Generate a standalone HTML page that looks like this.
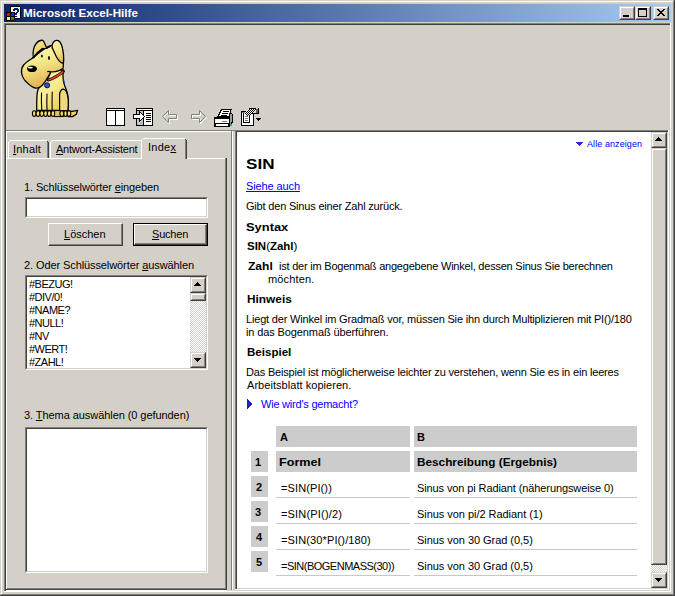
<!DOCTYPE html>
<html><head><meta charset="utf-8">
<style>
*{margin:0;padding:0;box-sizing:border-box}
html,body{width:675px;height:596px;overflow:hidden;background:#d4d0c8}
body{position:relative;font-family:"Liberation Sans",sans-serif;font-size:11px;color:#000}
.a{position:absolute}
.t{position:absolute;white-space:nowrap;line-height:13px}
u{text-decoration:underline;text-underline-offset:1px}
.r{position:absolute;border-style:solid;border-width:1px;border-color:#d4d0c8 #404040 #404040 #d4d0c8;background:#d4d0c8}
.r>i{position:absolute;left:0;top:0;right:0;bottom:0;border-style:solid;border-width:1px;border-color:#fff #808080 #808080 #fff}
.p{position:absolute;border-style:solid;border-width:1px;border-color:#fff #404040 #404040 #fff;background:#d4d0c8}
.p>i{position:absolute;left:0;top:0;right:0;bottom:0;border-style:solid;border-width:0 1px 1px 0;border-color:#808080}
.s{position:absolute;border-style:solid;border-width:1px;border-color:#808080 #fff #fff #808080}
.s>i{position:absolute;left:0;top:0;right:0;bottom:0;border-style:solid;border-width:1px;border-color:#404040 #d4d0c8 #d4d0c8 #404040;background:#fff}
.chk{position:absolute;background-color:#d4d0c8;background-image:repeating-conic-gradient(#fff 0 25%,#d4d0c8 0 50%);background-size:2px 2px}
.g{position:absolute;background:#cccccc}
.ln{position:absolute;height:1px;background:#c8c8c8}
</style></head><body>

<!-- window frame -->
<div class="a" style="left:1px;top:1px;width:673px;height:1px;background:#fff"></div>
<div class="a" style="left:1px;top:1px;width:1px;height:593px;background:#fff"></div>
<div class="a" style="left:673px;top:1px;width:1px;height:594px;background:#808080"></div>
<div class="a" style="left:674px;top:0;width:1px;height:596px;background:#404040"></div>
<div class="a" style="left:1px;top:594px;width:673px;height:1px;background:#808080"></div>
<div class="a" style="left:0;top:595px;width:675px;height:1px;background:#404040"></div>

<!-- title bar -->
<div class="a" style="left:4px;top:4px;width:667px;height:18px;background:linear-gradient(to right,#0a246a,#a6caf0)"></div>
<svg class="a" style="left:4px;top:4px" width="20" height="18" viewBox="4 4 20 18" shape-rendering="crispEdges">
<path d="M10 6h10v1h1v11h-1v1h-4v1h-1v1h-1v-1h-1v-1h-3z" fill="#000"/>
<rect x="11" y="7" width="9" height="11" fill="#fff"/>
<g fill="#ffff00"><rect x="11" y="7" width="1" height="1"/><rect x="13" y="7" width="1" height="1"/><rect x="17" y="7" width="1" height="1"/><rect x="19" y="8" width="1" height="1"/><rect x="12" y="9" width="1" height="1"/><rect x="11" y="11" width="1" height="1"/><rect x="19" y="13" width="1" height="1"/><rect x="19" y="15" width="1" height="1"/><rect x="17" y="16" width="1" height="1"/></g>
<path d="M13 9h1v-1h4v1h1v3h-1v1h-1v2h-2v-2h1v-1h1v-2h-2v1h-2z" fill="#0a1a80"/>
<rect x="15" y="16" width="2" height="1" fill="#0a1a80"/>
<rect x="6" y="12" width="9" height="9" fill="#000"/>
<rect x="7" y="13" width="3" height="3" fill="#ff0000"/>
<rect x="11" y="13" width="3" height="3" fill="#0030ff"/>
<rect x="7" y="17" width="3" height="3" fill="#ffff00"/>
<rect x="11" y="17" width="3" height="3" fill="#00a000"/>
</svg>

<div class="r" style="left:619px;top:6px;width:16px;height:14px"><i></i></div>
<div class="r" style="left:635px;top:6px;width:16px;height:14px"><i></i></div>
<div class="r" style="left:653px;top:6px;width:16px;height:14px"><i></i></div>
<div class="a" style="left:623px;top:15px;width:6px;height:2px;background:#000"></div>
<div class="a" style="left:638px;top:8px;width:9px;height:9px;border:1px solid #000;border-top-width:2px"></div>
<svg class="a" style="left:657px;top:9px" width="8" height="7" viewBox="0 0 8 7" shape-rendering="crispEdges"><path d="M0 0h2v1h1v1h2v-1h1v-1h2v1h-1v1h-1v1h-1v1h1v1h1v1h1v1h-2v-1h-1v-1h-2v1h-1v1h-2v-1h1v-1h1v-1h1v-1h-1v-1h-1v-1h-1z" fill="#000"/></svg>

<!-- client edge -->
<div class="a" style="left:4px;top:23px;width:667px;height:1px;background:#808080"></div>
<div class="a" style="left:4px;top:23px;width:1px;height:569px;background:#808080"></div>
<div class="a" style="left:5px;top:24px;width:665px;height:1px;background:#404040"></div>
<div class="a" style="left:5px;top:24px;width:1px;height:567px;background:#404040"></div>
<div class="a" style="left:6px;top:131px;width:1px;height:460px;background:#fff"></div>
<div class="a" style="left:670px;top:23px;width:1px;height:569px;background:#fff"></div>
<div class="a" style="left:4px;top:591px;width:667px;height:1px;background:#fff"></div>
<div class="a" style="left:6px;top:590px;width:221px;height:1px;background:#fff"></div>

<!-- toolbar -->
<svg class="a" style="left:16px;top:36px" width="64" height="84" viewBox="16 36 64 84">
<defs>
<linearGradient id="fur" x1="0" y1="0" x2="1" y2="1"><stop offset="0" stop-color="#fffcc0"/><stop offset="0.5" stop-color="#f6ea8c"/><stop offset="1" stop-color="#e4bc58"/></linearGradient>
<linearGradient id="snout" x1="0" y1="0" x2="0.3" y2="1"><stop offset="0" stop-color="#fffac0"/><stop offset="0.5" stop-color="#f6e888"/><stop offset="1" stop-color="#e0b050"/></linearGradient>
<linearGradient id="ear" x1="0" y1="0" x2="0.6" y2="1"><stop offset="0" stop-color="#fcf4a0"/><stop offset="0.6" stop-color="#eed070"/><stop offset="1" stop-color="#d8a040"/></linearGradient>
<linearGradient id="ear2" x1="0" y1="0" x2="0.3" y2="1"><stop offset="0" stop-color="#fcf4a8"/><stop offset="0.7" stop-color="#f4e080"/><stop offset="1" stop-color="#e4b850"/></linearGradient>
</defs>
<g stroke="#000" stroke-width="1.3" stroke-linejoin="round" stroke-linecap="round">
<!-- tail -->
<path d="M68 111 L72 111.3 L77.6 110.3 L76.3 114.3 L72.5 116.6 L68 116.6 Z" fill="#f0d460"/>
<!-- body -->
<path d="M41 85 C38.5 87.5 37.4 90 37 95 C36.7 100 36.7 106 36.7 110.5 L68 110.5 C68.6 104 68.6 97 67 92 C66 88 64 85 63.4 81 C62.8 77 63 73 63.4 70 L48 70 Z" fill="url(#fur)"/>
<!-- haunch -->
<path d="M59.6 110.5 L59.6 94 C60.3 91 61.8 89.2 63.4 89.2 C65.8 89.6 67.6 93 68.2 100 C68.4 104 68.2 108 67.9 110.5 Z" fill="#f2d878" stroke-width="1.2"/>
<!-- toes -->
<g fill="#f4e070" stroke-width="1.1">
<ellipse cx="34.2" cy="113.6" rx="1.8" ry="2.9"/>
<ellipse cx="38" cy="113.6" rx="1.9" ry="2.9"/>
<ellipse cx="41.8" cy="113.6" rx="1.9" ry="2.9"/>
<ellipse cx="45.6" cy="113.6" rx="1.9" ry="2.9"/>
<ellipse cx="49.3" cy="113.6" rx="1.9" ry="2.9"/>
<ellipse cx="53" cy="113.6" rx="1.9" ry="2.9"/>
<ellipse cx="65.5" cy="113.6" rx="1.9" ry="2.9"/>
<ellipse cx="69" cy="113.6" rx="1.8" ry="2.8"/>
</g>
<path d="M55 110.6 L63.6 110.6 L63.6 116.6 L55 116.6 Z" fill="#e8c058" stroke-width="1"/>
<ellipse cx="61.8" cy="113.6" rx="1.9" ry="2.9" fill="#f0d468" stroke-width="1.1"/>
<!-- leg lines -->
<g fill="none" stroke-width="1.1">
<path d="M41.5 93 C41.3 99 41.4 105 41.8 110"/>
<path d="M47 94 C46.8 100 46.8 105 47 110"/>
<path d="M52.2 92 C52 99 52 105 52.2 110"/>
</g>
<!-- head -->
<path d="M33.5 57.4 C30.5 59.5 26 62 23.6 65 C21.6 67.5 21.3 70.5 21.6 73 C22.2 77 24 80 27 82.6 C29.5 85 32.5 87.6 35.8 88.2 C39 88.4 42 86 44.2 82.8 C46 80.5 48.4 77 49.4 74.8 C50.3 73.2 50.6 72 50.4 71.8 C54 72.2 59 71.5 63.2 68 C63.8 64 63.5 58 62.6 53 C61.5 48 58 45 54 45 C50 45 44 48 33.5 57.4 Z" fill="url(#snout)"/>
<!-- left ear -->
<path d="M33.3 57.6 C32.6 52 33.5 47 36.2 43.5 C38 41.3 40.8 40.1 42.6 40.3 C44 41.3 45 44 46 46.6 C46.5 47.6 47.2 48 47.4 48 L42.4 48.8 C39 51 36 54 33.3 57.6 Z" fill="url(#ear)"/>
<path d="M33.5 57.4 C36 54 39 51 42.6 48.6" fill="none" stroke-width="1.6"/>
<!-- head top notch -->
<path d="M46.6 47.6 C48 48 49.5 47.3 50.8 45.6" fill="none" stroke-width="1.2"/>
<!-- right ear -->
<path d="M52.9 49.3 C51.2 47 52.2 43 54.3 41.2 C55.5 40.3 57 40.1 58.3 40.6 C60.2 41.6 61.6 44.5 62.4 48 C63.3 52 63.9 56 63.7 59.5 C63.6 61.5 63.1 63.2 62.4 63.2 C60.5 62.5 58.5 60.5 56.5 57 C55 54 54 51.5 52.9 49.3 Z" fill="url(#ear2)"/>
</g>
<!-- nose -->
<ellipse cx="32" cy="68.8" rx="5" ry="3.3" fill="#000"/>
<ellipse cx="30.4" cy="67.6" rx="2.5" ry="0.9" fill="#fff"/>
<!-- eyes -->
<ellipse cx="41.9" cy="56" rx="0.9" ry="1.6" fill="#000"/>
<ellipse cx="49" cy="58" rx="0.95" ry="1.9" fill="#000"/>
<!-- mouth -->
<path d="M47.2 71.8 C48.5 71.2 50.4 71.4 50.4 72.6 C50 75 48 77.5 46 79.8" fill="none" stroke="#000" stroke-width="1.2"/>
<!-- collar -->
<path d="M48.2 80 C53 78.5 58.5 75.5 63.4 71.3" fill="none" stroke="#000" stroke-width="3" stroke-linecap="round"/>
<path d="M48.8 79.9 C53 78.6 58.5 75.7 62.9 71.9" fill="none" stroke="#f04818" stroke-width="1.5" stroke-linecap="round"/>
<!-- tag -->
<circle cx="47.1" cy="85.3" r="2.6" fill="#1e5ae8" stroke="#000" stroke-width="0.8"/>
<path d="M63.6 79.5 L64.6 84" fill="none" stroke="#2040b0" stroke-width="1"/>
</svg>

<svg class="a" style="left:100px;top:100px" width="170" height="32" viewBox="100 100 170 32" shape-rendering="crispEdges">
<!-- icon1: hide -->
<rect x="106" y="108" width="19" height="18" fill="#000"/>
<rect x="107" y="111" width="8" height="14" fill="#fff"/>
<rect x="116" y="111" width="8" height="14" fill="#fff"/>
<rect x="107" y="109" width="17" height="1" fill="#fff"/>
<!-- icon2: show -->
<rect x="136" y="108" width="17" height="18" fill="#000"/>
<rect x="137" y="111" width="6" height="14" fill="#c0c0c0"/>
<rect x="144" y="111" width="8" height="14" fill="#fff"/>
<rect x="137" y="109" width="15" height="1" fill="#fff"/>
<g fill="#000"><rect x="146" y="113" width="5" height="1"/><rect x="146" y="115" width="5" height="1"/><rect x="146" y="117" width="5" height="1"/><rect x="146" y="119" width="5" height="1"/><rect x="146" y="121" width="5" height="1"/></g>
<path d="M133 114h6v-3h1v1h1v1h1v1h1v1h1v1h1v1h-1v1h-1v1h-1v1h-1v1h-1v1h-1v-3h-6z" fill="#000"/>
<path d="M134 115h6v-2h1v1h1v1h1v1h1v1h-1v1h-1v1h-1v1h-1v-2h-6z" fill="#fff"/>
<!-- back (disabled) -->
<g shape-rendering="auto" fill="none" stroke-width="1">
<path d="M169.5 111.5 L163.5 117.5 L169.5 123.5 V119.5 H177.5 V115.5 H169.5 Z" stroke="#fff"/>
<path d="M168.5 110.5 L162.5 116.5 L168.5 122.5 V118.5 H176.5 V114.5 H168.5 Z" stroke="#808080"/>
<path d="M192.5 115.5 H200.5 V111.5 L206.5 117.5 L200.5 123.5 V119.5 H192.5 Z" stroke="#fff"/>
<path d="M191.5 114.5 H199.5 V110.5 L205.5 116.5 L199.5 122.5 V118.5 H191.5 Z" stroke="#808080"/>
</g>
<!-- print -->
<path d="M221 109h11v1h-1v7h-14v-1h1v-2h1v-2h1v-2h1z" fill="#000"/>
<path d="M222 110h8v6h-11v-1h1v-2h1v-2h1z" fill="#fff"/>
<g fill="#000"><rect x="223" y="111" width="6" height="1"/><rect x="222" y="113" width="6" height="1"/><rect x="221" y="115" width="6" height="1"/></g>
<path d="M229 113h3v1h1v9h-1v2h-1v1h-2z" fill="#000"/>
<path d="M230 114h2v8h-1v2h-1z" fill="#a0a0a0"/>
<rect x="214" y="117" width="16" height="10" fill="#000"/>
<rect x="215" y="119" width="14" height="4" fill="#fff"/>
<rect x="216" y="124" width="12" height="2" fill="#fff"/>
<rect x="222" y="121" width="5" height="1" fill="#808080"/>
<rect x="230" y="124" width="2" height="2" fill="#00c0c0"/>
<!-- options -->
<rect x="241" y="111" width="13" height="15" fill="#000"/>
<rect x="242" y="113" width="11" height="12" fill="#fff"/>
<rect x="242" y="112" width="3" height="1" fill="#808080"/>
<rect x="243" y="113" width="7" height="10" fill="#000"/>
<rect x="244" y="114" width="5" height="8" fill="#fff"/>
<g fill="#808080"><rect x="245" y="116" width="3" height="1"/><rect x="245" y="118" width="3" height="1"/><rect x="245" y="120" width="3" height="1"/></g>
<rect x="249" y="108" width="7" height="1" fill="#000"/>
<rect x="256" y="109" width="2" height="4" fill="#606060"/>
<rect x="258" y="108" width="1" height="6" fill="#000"/>
<rect x="252" y="113" width="6" height="1" fill="#000"/>
<rect x="248" y="109" width="1" height="1" fill="#fff"/>
<rect x="249" y="109" width="1" height="1" fill="#000"/>
<rect x="250" y="109" width="1" height="1" fill="#fff"/>
<rect x="251" y="109" width="1" height="1" fill="#000"/>
<rect x="252" y="109" width="1" height="1" fill="#fff"/>
<rect x="253" y="109" width="1" height="1" fill="#000"/>
<rect x="254" y="109" width="1" height="1" fill="#fff"/>
<rect x="255" y="109" width="1" height="1" fill="#000"/>
<rect x="247" y="110" width="1" height="1" fill="#fff"/>
<rect x="248" y="110" width="1" height="1" fill="#000"/>
<rect x="249" y="110" width="1" height="1" fill="#fff"/>
<rect x="250" y="110" width="1" height="1" fill="#000"/>
<rect x="251" y="110" width="1" height="1" fill="#fff"/>
<rect x="252" y="110" width="1" height="1" fill="#000"/>
<rect x="253" y="110" width="1" height="1" fill="#fff"/>
<rect x="254" y="110" width="1" height="1" fill="#000"/>
<rect x="255" y="110" width="1" height="1" fill="#fff"/>
<rect x="246" y="111" width="1" height="1" fill="#fff"/>
<rect x="247" y="111" width="1" height="1" fill="#000"/>
<rect x="248" y="111" width="1" height="1" fill="#fff"/>
<rect x="249" y="111" width="1" height="1" fill="#000"/>
<rect x="250" y="111" width="1" height="1" fill="#fff"/>
<rect x="251" y="111" width="1" height="1" fill="#000"/>
<rect x="252" y="111" width="1" height="1" fill="#fff"/>
<rect x="253" y="111" width="1" height="1" fill="#000"/>
<rect x="254" y="111" width="1" height="1" fill="#fff"/>
<rect x="245" y="112" width="1" height="1" fill="#fff"/>
<rect x="246" y="112" width="1" height="1" fill="#000"/>
<rect x="247" y="112" width="1" height="1" fill="#fff"/>
<rect x="248" y="112" width="1" height="1" fill="#000"/>
<rect x="249" y="112" width="1" height="1" fill="#fff"/>
<rect x="250" y="112" width="1" height="1" fill="#000"/>
<rect x="251" y="112" width="1" height="1" fill="#fff"/>
<rect x="252" y="112" width="1" height="1" fill="#000"/>
<rect x="253" y="112" width="1" height="1" fill="#fff"/>
<rect x="244" y="113" width="1" height="1" fill="#fff"/>
<rect x="245" y="113" width="1" height="1" fill="#000"/>
<rect x="246" y="113" width="1" height="1" fill="#fff"/>
<rect x="247" y="113" width="1" height="1" fill="#000"/>
<rect x="248" y="113" width="1" height="1" fill="#fff"/>
<rect x="249" y="113" width="1" height="1" fill="#000"/>
<rect x="250" y="113" width="1" height="1" fill="#fff"/>
<rect x="251" y="113" width="1" height="1" fill="#000"/>
<rect x="245" y="114" width="1" height="1" fill="#fff"/>
<rect x="246" y="114" width="1" height="1" fill="#000"/>
<rect x="247" y="114" width="1" height="1" fill="#fff"/>
<rect x="248" y="114" width="1" height="1" fill="#000"/>
<rect x="249" y="114" width="1" height="1" fill="#fff"/>
<rect x="250" y="114" width="1" height="1" fill="#000"/>
<rect x="247" y="115" width="1" height="1" fill="#000"/>
<rect x="248" y="115" width="1" height="1" fill="#fff"/>
<path d="M256 118h5v1h-1v1h-1v1h-1v-1h-1v-1h-1z" fill="#000"/>
</svg>

<div class="a" style="left:6px;top:130px;width:662px;height:1px;background:#808080"></div>
<div class="a" style="left:6px;top:131px;width:225px;height:1px;background:#fff"></div>

<!-- tab control -->
<div class="a" style="left:6px;top:158px;width:135px;height:1px;background:#fff"></div>
<div class="a" style="left:187px;top:158px;width:39px;height:1px;background:#fff"></div>
<div class="a" style="left:225px;top:158px;width:1px;height:431px;background:#808080"></div>
<div class="a" style="left:226px;top:158px;width:1px;height:432px;background:#404040"></div>
<div class="a" style="left:7px;top:588px;width:219px;height:1px;background:#808080"></div>
<div class="a" style="left:6px;top:589px;width:221px;height:1px;background:#404040"></div>
<!-- tab Inhalt -->
<div class="a" style="left:8px;top:142px;width:1px;height:16px;background:#fff"></div>
<div class="a" style="left:9px;top:141px;width:1px;height:1px;background:#fff"></div>
<div class="a" style="left:10px;top:140px;width:37px;height:1px;background:#fff"></div>
<div class="a" style="left:47px;top:141px;width:1px;height:1px;background:#404040"></div>
<div class="a" style="left:47px;top:142px;width:1px;height:16px;background:#808080"></div>
<div class="a" style="left:48px;top:142px;width:1px;height:16px;background:#404040"></div>
<!-- tab Antwort -->
<div class="a" style="left:50px;top:142px;width:1px;height:16px;background:#fff"></div>
<div class="a" style="left:51px;top:141px;width:1px;height:1px;background:#fff"></div>
<div class="a" style="left:52px;top:140px;width:89px;height:1px;background:#fff"></div>
<!-- tab Index (selected) -->
<div class="a" style="left:141px;top:140px;width:1px;height:19px;background:#fff"></div>
<div class="a" style="left:142px;top:139px;width:1px;height:1px;background:#fff"></div>
<div class="a" style="left:143px;top:138px;width:42px;height:1px;background:#fff"></div>
<div class="a" style="left:185px;top:139px;width:1px;height:1px;background:#404040"></div>
<div class="a" style="left:185px;top:140px;width:1px;height:19px;background:#808080"></div>
<div class="a" style="left:186px;top:140px;width:1px;height:19px;background:#404040"></div>

<!-- left widgets -->
<div class="s" style="left:25px;top:197px;width:183px;height:21px"><i></i></div>
<div class="p" style="left:48px;top:223px;width:75px;height:23px"><i></i></div>
<div class="a" style="left:133px;top:223px;width:75px;height:23px;background:#000"></div>
<div class="p" style="left:134px;top:224px;width:73px;height:21px"><i></i></div>
<div class="s" style="left:25px;top:275px;width:183px;height:95px"><i></i></div>
<div class="chk" style="left:190px;top:293px;width:16px;height:59px"></div>
<div class="r" style="left:190px;top:277px;width:16px;height:16px"><i></i></div>
<div class="r" style="left:190px;top:293px;width:16px;height:8px"><i></i></div>
<div class="r" style="left:190px;top:352px;width:16px;height:16px"><i></i></div>
<svg class="a" style="left:194px;top:282px" width="7" height="4" shape-rendering="crispEdges"><path d="M3 0h1v1h1v1h1v1h1v1h-7v-1h1v-1h1v-1h1z"/></svg>
<svg class="a" style="left:194px;top:358px" width="7" height="4" shape-rendering="crispEdges"><path d="M0 0h7v1h-1v1h-1v1h-1v1h-1v-1h-1v-1h-1v-1h-1z"/></svg>
<div class="s" style="left:25px;top:427px;width:183px;height:146px"><i></i></div>

<!-- splitter / right frame -->
<div class="a" style="left:231px;top:130px;width:1px;height:460px;background:#808080"></div>
<div class="a" style="left:232px;top:131px;width:1px;height:459px;background:#fff"></div>
<div class="a" style="left:235px;top:130px;width:1px;height:460px;background:#808080"></div>
<div class="a" style="left:236px;top:131px;width:432px;height:1px;background:#404040"></div>
<div class="a" style="left:236px;top:131px;width:1px;height:458px;background:#404040"></div>
<div class="a" style="left:237px;top:132px;width:430px;height:456px;background:#fff"></div>
<div class="a" style="left:235px;top:589px;width:434px;height:1px;background:#fff"></div>
<div class="a" style="left:668px;top:130px;width:1px;height:460px;background:#fff"></div>

<!-- right scrollbar -->
<div class="chk" style="left:651px;top:148px;width:16px;height:424px"></div>
<div class="r" style="left:651px;top:132px;width:16px;height:16px"><i></i></div>
<div class="r" style="left:651px;top:148px;width:16px;height:417px"><i></i></div>
<div class="r" style="left:651px;top:572px;width:16px;height:16px"><i></i></div>
<svg class="a" style="left:655px;top:137px" width="7" height="4" shape-rendering="crispEdges"><path d="M3 0h1v1h1v1h1v1h1v1h-7v-1h1v-1h1v-1h1z"/></svg>
<svg class="a" style="left:655px;top:578px" width="7" height="4" shape-rendering="crispEdges"><path d="M0 0h7v1h-1v1h-1v1h-1v1h-1v-1h-1v-1h-1v-1h-1z"/></svg>

<!-- content decorations -->
<svg class="a" style="left:576px;top:142px" width="7" height="5" shape-rendering="crispEdges"><path d="M0 0h7v1h-1v1h-1v1h-1v1h-1v-1h-1v-1h-1v-1h-1z" fill="#2828e8"/></svg>
<svg class="a" style="left:247px;top:399px" width="5" height="10" shape-rendering="crispEdges"><path d="M0 0h1v1h1v1h1v1h1v1h1v2h-1v1h-1v1h-1v1h-1v1h-1z" fill="#2020d0"/></svg>

<!-- table -->
<div class="g" style="left:276px;top:426px;width:134px;height:21px"></div>
<div class="g" style="left:414px;top:426px;width:223px;height:21px"></div>
<div class="g" style="left:251px;top:451px;width:17px;height:21px"></div>
<div class="g" style="left:276px;top:451px;width:134px;height:21px"></div>
<div class="g" style="left:414px;top:451px;width:223px;height:21px"></div>
<div class="g" style="left:251px;top:476px;width:17px;height:21px"></div>
<div class="g" style="left:251px;top:501px;width:17px;height:21px"></div>
<div class="g" style="left:251px;top:526px;width:17px;height:21px"></div>
<div class="g" style="left:251px;top:551px;width:17px;height:21px"></div>
<div class="ln" style="left:276px;top:497px;width:134px"></div>
<div class="ln" style="left:414px;top:497px;width:223px"></div>
<div class="ln" style="left:276px;top:523px;width:134px"></div>
<div class="ln" style="left:414px;top:523px;width:223px"></div>
<div class="ln" style="left:276px;top:549px;width:134px"></div>
<div class="ln" style="left:414px;top:549px;width:223px"></div>
<div class="ln" style="left:276px;top:575px;width:134px"></div>
<div class="ln" style="left:414px;top:575px;width:223px"></div>

<div class="t" style="left:23.0px;top:7px;letter-spacing:0.0px;transform:scaleX(1.0561);transform-origin:0 0;font-weight:bold;color:#fff">Microsoft Excel-Hilfe</div>
<div class="t" style="left:13.0px;top:143px;letter-spacing:0.2px"><u>I</u>nhalt</div>
<div class="t" style="left:56.0px;top:143px;letter-spacing:-0.25px"><u>A</u>ntwort-Assistent</div>
<div class="t" style="left:148.0px;top:141px;letter-spacing:0.25px">Inde<u>x</u></div>
<div class="t" style="left:24.0px;top:181px;letter-spacing:-0.115px">1. Schlüsselwörter <u>e</u>ingeben</div>
<div class="t" style="left:64.0px;top:228px;letter-spacing:0.0px"><u>L</u>öschen</div>
<div class="t" style="left:152.0px;top:228px;letter-spacing:-0.2px"><u>S</u>uchen</div>
<div class="t" style="left:24.0px;top:259px;letter-spacing:-0.094px">2. Oder Schlüsselwörter <u>a</u>uswählen</div>
<div class="t" style="left:29.0px;top:278px;letter-spacing:-0.5px">#BEZUG!</div>
<div class="t" style="left:29.0px;top:291px;letter-spacing:-0.5px">#DIV/0!</div>
<div class="t" style="left:29.0px;top:304px;letter-spacing:-0.5px">#NAME?</div>
<div class="t" style="left:29.0px;top:317px;letter-spacing:-0.5px">#NULL!</div>
<div class="t" style="left:29.0px;top:330px;letter-spacing:-0.5px">#NV</div>
<div class="t" style="left:29.0px;top:343px;letter-spacing:-0.5px">#WERT!</div>
<div class="t" style="left:29.0px;top:356px;letter-spacing:-0.5px">#ZAHL!</div>
<div class="t" style="left:24.0px;top:409px;letter-spacing:-0.067px">3. <u>T</u>hema auswählen (0 gefunden)</div>
<div class="t" style="left:587.0px;top:138px;letter-spacing:0.083px;font-size:9px;color:#0000ff">Alle anzeigen</div>
<div class="t" style="left:246.0px;top:157px;letter-spacing:0.0px;transform:scaleX(1.138);transform-origin:0 0;font-size:15px;font-weight:bold">SIN</div>
<div class="t" style="left:246.0px;top:180px;letter-spacing:-0.111px;color:#0000ff"><u>Siehe auch</u></div>
<div class="t" style="left:246.0px;top:200px;letter-spacing:-0.188px">Gibt den Sinus einer Zahl zurück.</div>
<div class="t" style="left:246.0px;top:221px;letter-spacing:0.0px;transform:scaleX(1.1722);transform-origin:0 0;font-weight:bold">Syntax</div>
<div class="t" style="left:247.0px;top:240px;letter-spacing:0.0px;transform:scaleX(1.0426);transform-origin:0 0;font-weight:bold">SIN<span style='font-weight:normal'>(</span>Zahl<span style='font-weight:normal'>)</span></div>
<div class="t" style="left:248.0px;top:260px;letter-spacing:0.0px;transform:scaleX(1.0952);transform-origin:0 0;font-weight:bold">Zahl</div>
<div class="t" style="left:279.0px;top:260px;letter-spacing:-0.219px">ist der im Bogenmaß angegebene Winkel, dessen Sinus Sie berechnen</div>
<div class="t" style="left:268.0px;top:273px;letter-spacing:0.143px">möchten.</div>
<div class="t" style="left:247.0px;top:293px;letter-spacing:0.0px;transform:scaleX(1.0769);transform-origin:0 0;font-weight:bold">Hinweis</div>
<div class="t" style="left:246.0px;top:313px;letter-spacing:-0.175px">Liegt der Winkel im Gradmaß vor, müssen Sie ihn durch Multiplizieren mit PI()/180</div>
<div class="t" style="left:246.0px;top:326px;letter-spacing:-0.115px">in das Bogenmaß überführen.</div>
<div class="t" style="left:247.0px;top:346px;letter-spacing:0.0px;transform:scaleX(1.05);transform-origin:0 0;font-weight:bold">Beispiel</div>
<div class="t" style="left:246.0px;top:366px;letter-spacing:-0.177px">Das Beispiel ist möglicherweise leichter zu verstehen, wenn Sie es in ein leeres</div>
<div class="t" style="left:247.0px;top:379px;letter-spacing:0.048px">Arbeitsblatt kopieren.</div>
<div class="t" style="left:261.0px;top:398px;letter-spacing:-0.222px;color:#0000ff">Wie wird's gemacht?</div>
<div class="t" style="left:280.0px;top:431px;letter-spacing:0.0px;font-weight:bold">A</div>
<div class="t" style="left:417.0px;top:431px;letter-spacing:0.0px;font-weight:bold">B</div>
<div class="t" style="left:279.0px;top:456px;letter-spacing:0.0px;transform:scaleX(1.1471);transform-origin:0 0;font-weight:bold">Formel</div>
<div class="t" style="left:417.0px;top:456px;letter-spacing:0.0px;transform:scaleX(1.0698);transform-origin:0 0;font-weight:bold">Beschreibung (Ergebnis)</div>
<div class="t" style="left:255.0px;top:456px;letter-spacing:0.0px;font-weight:bold">1</div>
<div class="t" style="left:256.0px;top:481px;letter-spacing:0.0px;font-weight:bold">2</div>
<div class="t" style="left:255.0px;top:506px;letter-spacing:0.0px;font-weight:bold">3</div>
<div class="t" style="left:256.0px;top:531px;letter-spacing:0.0px;font-weight:bold">4</div>
<div class="t" style="left:256.0px;top:556px;letter-spacing:0.0px;font-weight:bold">5</div>
<div class="t" style="left:281.0px;top:482px;letter-spacing:0.111px">=SIN(PI())</div>
<div class="t" style="left:281.0px;top:508px;letter-spacing:0.182px">=SIN(PI()/2)</div>
<div class="t" style="left:281.0px;top:534px;letter-spacing:0.125px">=SIN(30*PI()/180)</div>
<div class="t" style="left:281.0px;top:560px;letter-spacing:-0.5px">=SIN(BOGENMASS(30))</div>
<div class="t" style="left:417.0px;top:482px;letter-spacing:-0.105px">Sinus von pi Radiant (näherungsweise 0)</div>
<div class="t" style="left:417.0px;top:508px;letter-spacing:-0.04px">Sinus von pi/2 Radiant (1)</div>
<div class="t" style="left:417.0px;top:534px;letter-spacing:-0.045px">Sinus von 30 Grad (0,5)</div>
<div class="t" style="left:417.0px;top:560px;letter-spacing:-0.045px">Sinus von 30 Grad (0,5)</div>

</body></html>
